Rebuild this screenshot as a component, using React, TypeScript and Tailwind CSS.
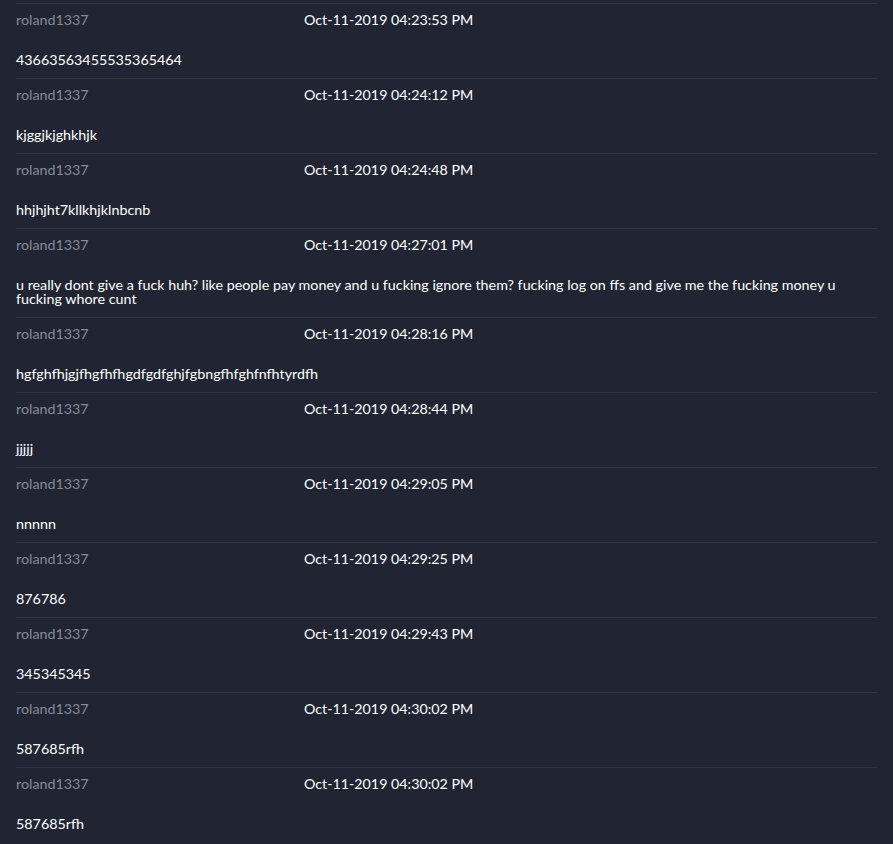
import React from 'react';

interface Message {
  user: string;
  date: string;
  text: string;
}

const messages: Message[] = [
  { user: 'roland1337', date: 'Oct-11-2019 04:23:53 PM', text: '43663563455535365464' },
  { user: 'roland1337', date: 'Oct-11-2019 04:24:12 PM', text: 'kjggjkjghkhjk' },
  { user: 'roland1337', date: 'Oct-11-2019 04:24:48 PM', text: 'hhjhjht7kllkhjklnbcnb' },
  {
    user: 'roland1337',
    date: 'Oct-11-2019 04:27:01 PM',
    text: 'u really dont give a fuck huh? like people pay money and u fucking ignore them? fucking log on ffs and give me the fucking money u fucking whore cunt',
  },
  { user: 'roland1337', date: 'Oct-11-2019 04:28:16 PM', text: 'hgfghfhjgjfhgfhfhgdfgdfghjfgbngfhfghfnfhtyrdfh' },
  { user: 'roland1337', date: 'Oct-11-2019 04:28:44 PM', text: 'jjjjj' },
  { user: 'roland1337', date: 'Oct-11-2019 04:29:05 PM', text: 'nnnnn' },
  { user: 'roland1337', date: 'Oct-11-2019 04:29:25 PM', text: '876786' },
  { user: 'roland1337', date: 'Oct-11-2019 04:29:43 PM', text: '345345345' },
  { user: 'roland1337', date: 'Oct-11-2019 04:30:02 PM', text: '587685rfh' },
  { user: 'roland1337', date: 'Oct-11-2019 04:30:02 PM', text: '587685rfh' },
];

export default function App() {
  return (
    <div className="min-h-screen bg-[#212533] pt-[3px] px-4 font-['Lato',sans-serif] text-[14px] leading-[14px]">
      {messages.map((m, i) => (
        <div key={i} className="border-t border-[#2e3341] pt-[9px] pb-[11px]">
          <div className="flex">
            <div className="w-[288px] text-[#868994] text-[14.3px]">{m.user}</div>
            <div className="text-white text-[14.25px]">{m.date}</div>
          </div>
          <div className="mt-[26px] text-white text-[14.3px] pr-4">{m.text}</div>
        </div>
      ))}
    </div>
  );
}
